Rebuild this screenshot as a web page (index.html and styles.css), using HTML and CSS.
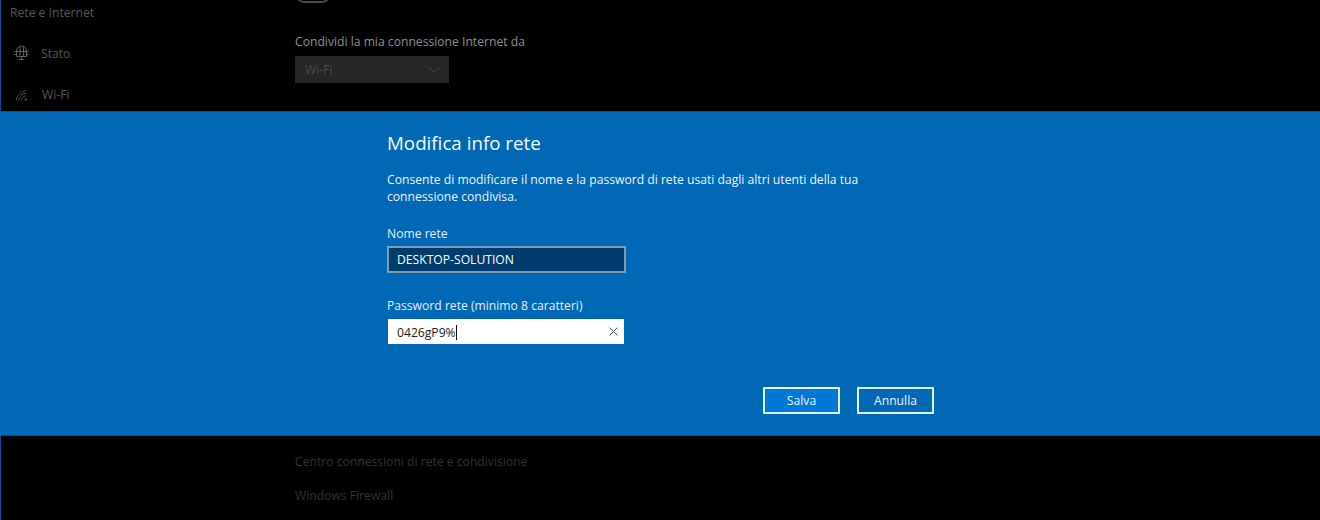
FILE: index.html
```html
<!DOCTYPE html>
<html lang="it">
<head>
<meta charset="utf-8">
<title>Modifica info rete</title>
<link rel="stylesheet" href="styles.css">
</head>
<body>
<div class="screen">
  <section class="backdrop top">
    <nav class="side">
      <div class="side-title">Rete e Internet</div>
      <div class="side-item status">
        <svg class="ico" width="15" height="16" viewBox="0 0 15 16" fill="none" stroke="#5e5e5e" stroke-width="1">
          <path d="M2.500 11.500V6a5 5 0 0 1 10 0v5.500z"/><path d="M.5 6.500h14M.5 9.500h2M12.500 9.500h2M6 1.500v10M9.500 1.500v10M7.500 11.500v2.500M5 14.500h5"/>
        </svg>
        <span>Stato</span>
      </div>
      <div class="side-item wifi">
        <svg class="ico" width="16" height="16" viewBox="0 0 16 16" fill="none" stroke="#4a4a4a" stroke-width="1">
          <path d="M2 14.500A12 12 0 0 1 12 4.500M4.500 14.500A9.500 9.500 0 0 1 12 7M7 14.500A7 7 0 0 1 12 9.500"/><path d="M10 14.500h3.500L12 11.500z" fill="#4a4a4a" stroke="none"/>
        </svg>
        <span>Wi-Fi</span>
      </div>
    </nav>
    <div class="pane">
      <div class="toggle"></div>
      <div class="share-label">Condividi la mia connessione Internet da</div>
      <div class="select">
        <span>Wi-Fi</span>
        <svg width="12" height="8" viewBox="0 0 12 8" fill="none" stroke="#4a4a4a" stroke-width="1"><path d="M1 1.500l5 5 5-5"/></svg>
      </div>
    </div>
  </section>
  <section class="dialog">
    <div class="dialog-body">
      <h1>Modifica info rete</h1>
      <p class="desc">Consente di modificare il nome e la password di rete usati dagli altri utenti della tua connessione condivisa.</p>
      <label class="lab first">Nome rete</label>
      <div class="field selected">DESKTOP-SOLUTION</div>
      <label class="lab second">Password rete (minimo 8 caratteri)</label>
      <div class="field active">
        <span class="val">0426gP9%</span><span class="caret"></span>
        <svg class="clear" width="9" height="9" viewBox="0 0 9 9" fill="none" stroke="#555" stroke-width="1"><path d="M.5.500l8 8M8.500.500l-8 8"/></svg>
      </div>
      <div class="actions">
        <button class="btn primary">Salva</button>
        <button class="btn">Annulla</button>
      </div>
    </div>
  </section>
  <section class="backdrop bottom">
    <div class="link">Centro connessioni di rete e condivisione</div>
    <div class="link">Windows Firewall</div>
  </section>
</div>
</body>
</html>
```
FILE: styles.css
```css
* { box-sizing: border-box; }
html, body { margin: 0; height: 100%; }
body { background: #000; font-family: "Open Sans", "Noto Sans", "Liberation Sans", sans-serif; font-size: 12.150px; overflow: hidden; }
.screen { width: 1320px; height: 520px; display: flex; flex-direction: column; background: #000; border-left: 1px solid #0a4a8a; }
.backdrop { background: #000; color: #4c4c4c; }
.top { flex: none; height: 111px; display: flex; overflow: hidden; }
.side { width: 294px; padding: 5px 0 0 9px; }
.side-title { height: 16px; line-height: 16px; color: #565656; }
.side-item { display: flex; align-items: center; gap: 12px; margin-top: 25px; height: 16px; padding-left: 4px; color: #565656; }
.side-item.status { margin-top: 24px; gap: 12px; }
.pane { flex: 1; }
.toggle { width: 36px; height: 18px; border: 2px solid #4a4a4a; border-radius: 9px; margin-top: -15px; }
.share-label { margin-top: 31px; height: 16px; line-height: 16px; color: #8e8e8e; }
.select { width: 154px; height: 27px; margin-top: 6px; background: #262626; display: flex; align-items: center; justify-content: space-between; padding: 0 9px 0 10px; color: #4a4a4a; }
.dialog { flex: none; height: 325px; background: #0068b5; border-top: 1px solid #0a4f8c; border-bottom: 1px solid #0a4f8c; margin-left: -1px; color: #fff; }
.dialog-body { width: 547px; margin-left: 387px; display: flex; flex-direction: column; }
h1 { margin: 20px 0 0; font-size: 18.750px; font-weight: 400; line-height: 22px; color: #f2f8fc; }
.desc { margin: 17px 0 0; width: 490px; line-height: 17px; color: #eaf3fa; }
.lab { display: block; height: 16px; line-height: 16px; color: #e2eef8; }
.lab.first { margin-top: 21px; }
.lab.second { margin-top: 25px; }
.field { width: 239px; height: 27px; margin-top: 5px; display: flex; align-items: center; }
.lab.first + .field { margin-top: 4px; }
.selected { background: #003c6e; border: 2px solid #7f9db7; padding-left: 8px; color: #fff; }
.active { background: #fff; border: solid #0068b5; border-width: 0 2px 2px 1px; padding: 1px 0 0 9px; color: #222; position: relative; }
.caret { width: 1px; height: 15px; background: #111; }
.clear { position: absolute; right: 6px; top: 8px; }
.actions { display: flex; justify-content: flex-end; gap: 17px; margin-top: 41px; }
.btn { width: 77px; height: 27px; background: transparent; border: 2px solid #e6f2fb; color: #e9f3fb; font: inherit; padding: 0; }
.btn.primary { background: #0078d7; }
.bottom { flex: 1; padding: 18px 0 0 294px; overflow: hidden; }
.link { height: 16px; line-height: 16px; margin-bottom: 18px; color: #333; }
```
